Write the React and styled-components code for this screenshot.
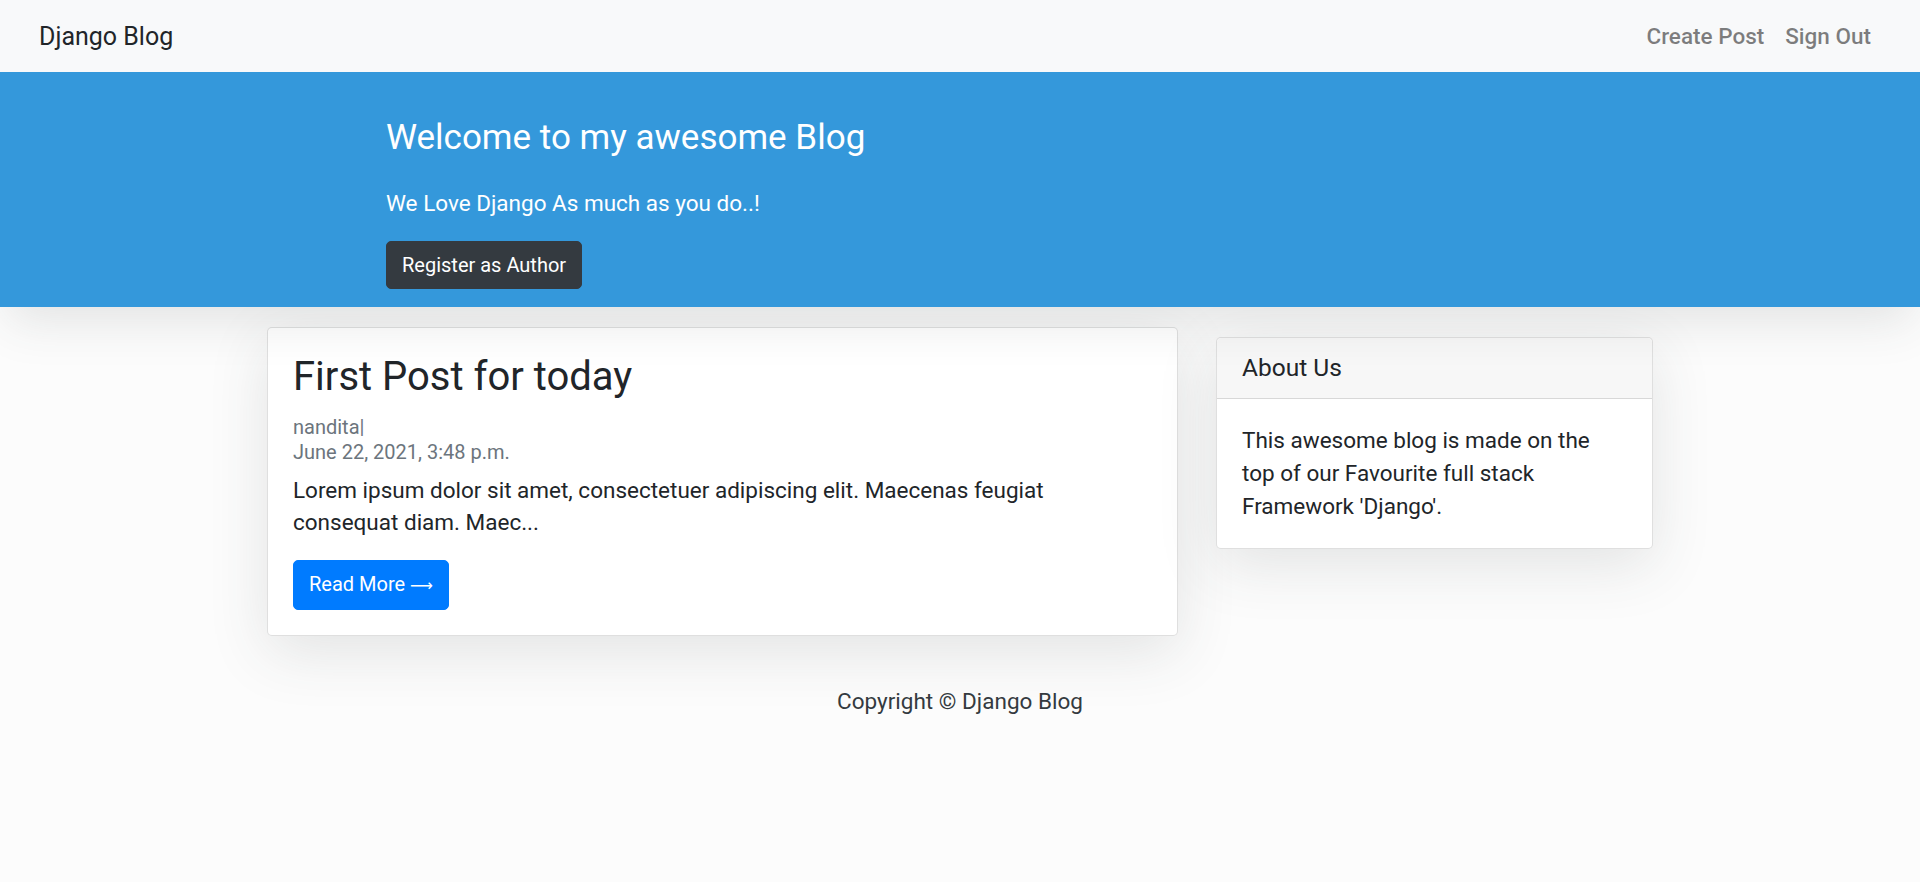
import styled, { createGlobalStyle } from "styled-components";

const GlobalStyle = createGlobalStyle`
  body {
    margin: 0;
    background: #fcfcfc;
    font-family: Roboto, "Liberation Sans", sans-serif;
    color: #212529;
  }
`;

const Navbar = styled.nav`
  position: relative;
  z-index: 2;
  height: 72px;
  background: #f8f9fa;
  display: flex;
  align-items: center;
  justify-content: space-between;
  padding: 0 49px 0 39px;
`;

const Brand = styled.a`
  font-size: 25px;
  color: #212529;
  text-decoration: none;
`;

const NavLinks = styled.div`
  display: flex;
  gap: 21px;
`;

const NavLink = styled.a`
  font-size: 22.5px;
  font-weight: 500;
  color: rgba(0, 0, 0, 0.5);
  text-decoration: none;
`;

const Banner = styled.header`
  position: relative;
  z-index: 1;
  background: #3498db;
  padding: 45px 386px 18px;
  color: #fff;
  box-shadow: 0 22px 45px -8px rgba(52, 58, 64, 0.13);
`;

const BannerTitle = styled.h1`
  margin: 0 0 26px;
  font-size: 35px;
  font-weight: 400;
  line-height: 1.2;
`;

const Lead = styled.p`
  margin: 0 0 19px;
  font-size: 22.5px;
  line-height: 37px;
`;

const Button = styled.a`
  display: inline-block;
  font-size: 20px;
  line-height: 30px;
  padding: 8px 15px;
  border-radius: 5px;
  color: #fff;
  text-decoration: none;
  border: 1px solid ${(p) => p.bg};
  background: ${(p) => p.bg};
`;

const Arrow = styled.span`
  font-family: "DejaVu Sans", sans-serif;
  font-size: 16px;
`;

const Main = styled.main`
  display: grid;
  grid-template-columns: 911px 437px;
  column-gap: 38px;
  align-items: start;
  width: 1386px;
  margin: 0 auto;
`;

const Card = styled.section`
  background: #fff;
  border: 1px solid rgba(0, 0, 0, 0.125);
  border-radius: 5px;
  margin-top: ${(p) => p.mt};
  box-shadow: 0 16px 60px rgba(52, 58, 64, 0.13);
`;

const CardBody = styled.div`
  padding: 25px;
`;

const PostTitle = styled.h2`
  margin: 0 0 14px;
  font-size: 40px;
  font-weight: 400;
  line-height: 48px;
`;

const Meta = styled.div`
  font-size: 20px;
  line-height: 24.5px;
  color: #6c757d;
  margin-bottom: 10px;
`;

const Excerpt = styled.p`
  margin: 0 0 22px;
  font-size: 22.5px;
  line-height: 32px;
`;

const CardHeader = styled.div`
  background: #f7f7f7;
  border-bottom: 1px solid rgba(0, 0, 0, 0.125);
  padding: 15px 25px;
  font-size: 24.5px;
  line-height: 30px;
  border-radius: 5px 5px 0 0;
`;

const AboutText = styled.p`
  margin: 0;
  font-size: 22.5px;
  line-height: 33px;
`;

const Footer = styled.footer`
  text-align: center;
  font-size: 22.5px;
  line-height: 30px;
  color: #343a40;
  padding: 50px 0 40px;
`;

export default function App() {
  return (
    <>
      <GlobalStyle />
      <Navbar>
        <Brand href="#">Django Blog</Brand>
        <NavLinks>
          <NavLink href="#">Create Post</NavLink>
          <NavLink href="#">Sign Out</NavLink>
        </NavLinks>
      </Navbar>

      <Banner>
        <BannerTitle>Welcome to my awesome Blog</BannerTitle>
        <Lead>We Love Django As much as you do..!</Lead>
        <Button href="#" bg="#343a40">Register as Author</Button>
      </Banner>

      <Main>
        <Card mt="20px">
          <CardBody>
            <PostTitle>First Post for today</PostTitle>
            <Meta>
              nandita|
              <br />
              June 22, 2021, 3:48 p.m.
            </Meta>
            <Excerpt>
              Lorem ipsum dolor sit amet, consectetuer adipiscing elit. Maecenas feugiat
              consequat diam. Maec...
            </Excerpt>
            <Button href="#" bg="#007bff">Read More <Arrow>⟶</Arrow></Button>
          </CardBody>
        </Card>

        <Card mt="30px">
          <CardHeader>About Us</CardHeader>
          <CardBody>
            <AboutText>
              This awesome blog is made on the top of our Favourite full stack
              Framework 'Django'.
            </AboutText>
          </CardBody>
        </Card>
      </Main>

      <Footer>Copyright © Django Blog</Footer>
    </>
  );
}
